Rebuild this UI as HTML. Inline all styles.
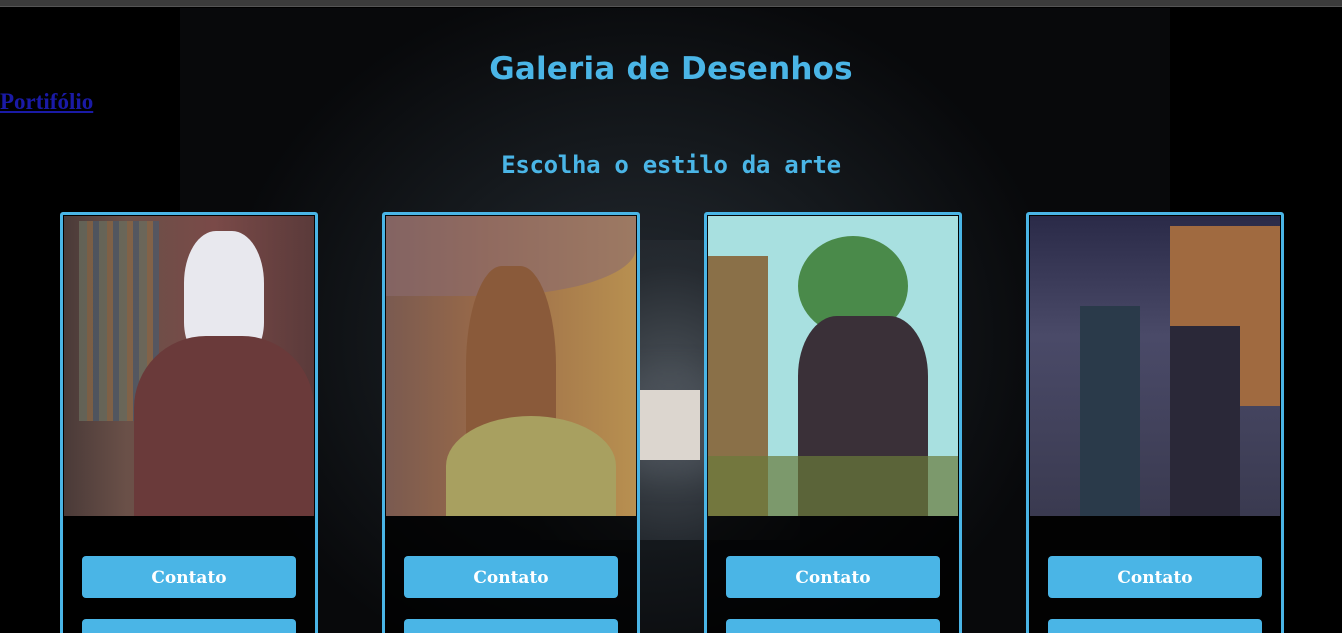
<!DOCTYPE html>
<html><head><meta charset="utf-8"><style>
*{margin:0;padding:0;box-sizing:border-box}
html,body{width:1342px;height:633px;overflow:hidden;background:#000}
body{position:relative;font-family:"Liberation Serif",serif}
.topbar{position:absolute;left:0;top:0;width:1342px;height:7px;background:#3b3b3b;border-bottom:1px solid #555}
.bg{position:absolute;left:180px;top:8px;width:990px;height:625px;
background:radial-gradient(ellipse 420px 360px at 460px 330px,#262c33 0%,#15191d 55%,#08090b 100%);}
.win{position:absolute;left:640px;top:390px;width:60px;height:70px;background:#dcd6cf;box-shadow:0 0 30px 10px #4a5058}
.tunnel{position:absolute;left:540px;top:240px;width:260px;height:300px;background:radial-gradient(ellipse at 50% 55%,#50575e,#252a30 60%,transparent 100%)}
h1{position:absolute;left:0;width:1342px;top:51px;text-align:center;font-family:"DejaVu Sans",sans-serif;font-size:31px;font-weight:bold;color:#4ab5e6;letter-spacing:0.2px}
a.p{position:absolute;left:0;top:89px;font-size:23px;font-weight:bold;color:#1a1aa6;text-decoration:underline}
h2{position:absolute;left:0;width:1342px;top:151px;text-align:center;font-family:"DejaVu Sans Mono",monospace;font-size:24px;font-weight:bold;color:#4ab5e6;letter-spacing:-0.3px}
.card{position:absolute;top:212px;width:258px;height:440px;border:3px solid #4ab5e6;border-radius:3px;background:rgba(0,0,0,0.75)}
.img{position:absolute;left:1px;top:1px;width:250px;height:300px}
.btn{position:absolute;left:19px;width:214px;height:42px;background:#4ab5e6;border-radius:4px;color:#fff;font-family:"DejaVu Serif",serif;font-weight:bold;font-size:17px;text-align:center;line-height:45px}
</style></head><body>
<div class="topbar"></div>
<div class="bg"></div>
<div class="tunnel"></div>
<div class="win"></div>
<h1>Galeria de Desenhos</h1>
<a class="p">Portifólio</a>
<h2>Escolha o estilo da arte</h2>

<div class="card" style="left:60px">
<div class="img" style="background:linear-gradient(90deg,#4a3a38 0%,#6a5048 25%,#7a4a48 60%,#5a3a3a 100%)">
<div style="position:absolute;left:15px;top:5px;width:80px;height:200px;background:repeating-linear-gradient(90deg,#6a7060 0 8px,#8a6a48 8px 14px,#4a5a6a 14px 20px);opacity:.7"></div>
<div style="position:absolute;left:120px;top:15px;width:80px;height:130px;background:#e8e8ee;border-radius:40% 40% 30% 30%"></div>
<div style="position:absolute;left:70px;top:120px;width:180px;height:180px;background:#6a3a3a;border-radius:40% 40% 0 0"></div>
</div>
<div class="btn" style="top:341px">Contato</div>
<div class="btn" style="top:404px"></div>
</div>

<div class="card" style="left:382px">
<div class="img" style="background:linear-gradient(90deg,#7a5a50 0%,#9a6a48 40%,#b89050 100%)">
<div style="position:absolute;left:0;top:0;width:250px;height:80px;background:#8a6a70;border-radius:0 0 60% 0;opacity:.6"></div>
<div style="position:absolute;left:80px;top:50px;width:90px;height:250px;background:#8a5a3a;border-radius:40% 40% 0 0"></div>
<div style="position:absolute;left:60px;top:200px;width:170px;height:100px;background:#a8a060;border-radius:50% 50% 0 0"></div>
</div>
<div class="btn" style="top:341px">Contato</div>
<div class="btn" style="top:404px"></div>
</div>

<div class="card" style="left:704px">
<div class="img" style="background:#a8e0e0">
<div style="position:absolute;left:0;top:40px;width:60px;height:260px;background:#8a7048"></div>
<div style="position:absolute;left:90px;top:20px;width:110px;height:100px;background:#4a8a4a;border-radius:50%"></div>
<div style="position:absolute;left:90px;top:100px;width:130px;height:200px;background:#3a3038;border-radius:30% 30% 0 0"></div>
<div style="position:absolute;left:0;top:240px;width:250px;height:60px;background:#6a7a3a;opacity:.7"></div>
</div>
<div class="btn" style="top:341px">Contato</div>
<div class="btn" style="top:404px"></div>
</div>

<div class="card" style="left:1026px">
<div class="img" style="background:linear-gradient(180deg,#2a2a48 0%,#4a4a68 40%,#3a3a50 100%)">
<div style="position:absolute;left:140px;top:10px;width:110px;height:180px;background:#a06a40"></div>
<div style="position:absolute;left:50px;top:90px;width:60px;height:210px;background:#2a3a4a"></div>
<div style="position:absolute;left:140px;top:110px;width:70px;height:190px;background:#2a2838"></div>
</div>
<div class="btn" style="top:341px">Contato</div>
<div class="btn" style="top:404px"></div>
</div>
</body></html>
